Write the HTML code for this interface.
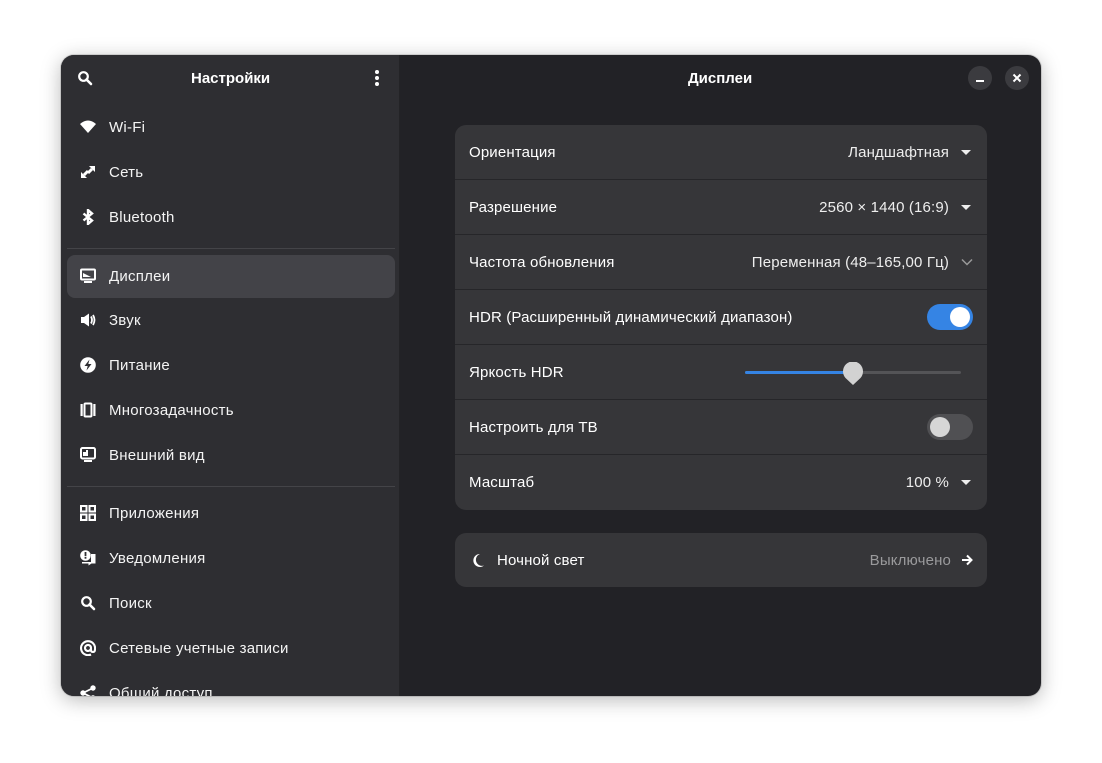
<!DOCTYPE html>
<html><head><meta charset="utf-8"><style>
*{box-sizing:border-box;margin:0;padding:0}
body{width:1102px;height:763px;background:#fff;font-family:"Liberation Sans","DejaVu Sans",sans-serif;font-size:15px;color:#fff;position:relative;overflow:hidden}
.win{position:absolute;left:61px;top:55px;width:980px;height:641px;border-radius:13px;overflow:hidden;background:#222226;box-shadow:0 4px 20px rgba(0,0,0,.28),0 0 0 1px rgba(0,0,0,.12)}
.side{position:absolute;left:0;top:0;width:339px;height:641px;background:#2e2e32;border-right:1px solid #232326}
.title{position:absolute;font-weight:bold;font-size:15px;top:15px}
.item{position:absolute;left:6px;width:328px;height:43px;border-radius:8px;display:flex;align-items:center;padding-left:42px;font-size:15px;color:#f4f4f4;letter-spacing:0.25px}
.item.sel{background:#434348}
.item svg{position:absolute;left:13px;top:13px}
.sep{position:absolute;left:6px;width:328px;height:1px;background:#444448}
.card{position:absolute;left:394px;width:532px;background:#363639;border-radius:11px;letter-spacing:0.15px}
.row{height:55px;border-bottom:1px solid #262629;display:flex;align-items:center;padding:0 14px;position:relative}
.row:last-child{border-bottom:none}
.val{margin-left:auto;color:#eee;display:flex;align-items:center}
.tri{width:0;height:0;border-left:5px solid transparent;border-right:5px solid transparent;border-top:5px solid #eee;margin-left:12px;margin-right:2px}
.btn{position:absolute;top:11px;width:24px;height:24px;border-radius:50%;background:#3b3b3f}
</style></head><body>
<div class="win">
<div class="side">
<svg style="position:absolute;left:16px;top:15px" width="16" height="16" viewBox="0 0 16 16"><circle cx="6.5" cy="6.5" r="4.3" fill="none" stroke="#fff" stroke-width="2.2"/><path d="M9.5 9.5L14 14" stroke="#fff" stroke-width="2.6" stroke-linecap="round"/></svg>
<div class="title" style="left:130px">Настройки</div>
<svg style="position:absolute;left:313px;top:14px" width="6" height="18"><circle cx="3" cy="3" r="2" fill="#fff"/><circle cx="3" cy="9" r="2" fill="#fff"/><circle cx="3" cy="15" r="2" fill="#fff"/></svg>

<div class="item" style="top:51px"><svg width="16" height="16" viewBox="0 0 16 16"><path d="M0 5Q8-2 16 5L8 14Z" fill="#fff"/></svg>Wi-Fi</div>
<div class="item" style="top:96px"><svg width="16" height="16" viewBox="0 0 16 16"><path d="M9 2h6v6zM7 14H1V8z" fill="#fff"/><path d="M12 5L8 9M4 11l4-4" stroke="#fff" stroke-width="3"/></svg>Сеть</div>
<div class="item" style="top:141px"><svg width="16" height="16" viewBox="0 0 16 16"><path d="M3.5 4.5l8.5 7-4 3.5V1l4 3.5-8.5 7" fill="none" stroke="#fff" stroke-width="2.4"/></svg>Bluetooth</div>
<div class="sep" style="top:193px"></div>
<div class="item sel" style="top:200px"><svg width="16" height="16" viewBox="0 0 16 16"><rect x="1" y="1.5" width="14" height="10" rx="1" fill="none" stroke="#fff" stroke-width="2"/><path d="M3 5l8 4H3z" fill="#fff"/><rect x="4" y="13" width="8" height="2" fill="#fff"/></svg>Дисплеи</div>
<div class="item" style="top:244px"><svg width="16" height="16" viewBox="0 0 16 16"><path d="M1 5h3l5-3.5v13L4 11H1z" fill="#fff"/><path d="M11 4.5q2 3.5 0 7M13 3q3 5 0 10" fill="none" stroke="#fff" stroke-width="1.8"/></svg>Звук</div>
<div class="item" style="top:289px"><svg width="16" height="16" viewBox="0 0 16 16"><circle cx="8" cy="8" r="7.8" fill="#fff"/><path d="M9.5 2.5L4.5 9h3.2l-1.2 4.5 5-6.5H8.3z" fill="#2e2e32"/></svg>Питание</div>
<div class="item" style="top:334px"><svg width="16" height="16" viewBox="0 0 16 16"><rect x="0.5" y="2" width="2.2" height="12" fill="#fff"/><rect x="13.3" y="2" width="2.2" height="12" fill="#fff"/><rect x="4.5" y="1.5" width="7" height="13" rx="1" fill="none" stroke="#fff" stroke-width="2"/></svg>Многозадачность</div>
<div class="item" style="top:379px"><svg width="16" height="16" viewBox="0 0 16 16"><rect x="1" y="1" width="14" height="10.5" rx="1.5" fill="none" stroke="#fff" stroke-width="2"/><path d="M3 9V5h3V3h2v6z" fill="#fff"/><rect x="4" y="13" width="8" height="2" fill="#fff"/></svg>Внешний вид</div>
<div class="sep" style="top:431px"></div>
<div class="item" style="top:437px"><svg width="16" height="16" viewBox="0 0 16 16"><g fill="none" stroke="#fff" stroke-width="2"><rect x="1" y="1" width="5.5" height="5.5"/><rect x="9.5" y="1" width="5.5" height="5.5"/><rect x="1" y="9.5" width="5.5" height="5.5"/><rect x="9.5" y="9.5" width="5.5" height="5.5"/></g></svg>Приложения</div>
<div class="item" style="top:482px"><svg width="16" height="16" viewBox="0 0 16 16"><path d="M11 4h4.5v9.5h-4l-3 2v-2H2v-1.5h9z" fill="#fff"/><circle cx="5.5" cy="5.5" r="5.3" fill="#fff"/><rect x="4.6" y="2" width="1.8" height="4.2" fill="#2e2e32"/><rect x="4.6" y="7" width="1.8" height="1.7" fill="#2e2e32"/></svg>Уведомления</div>
<div class="item" style="top:527px"><svg width="16" height="16" viewBox="0 0 16 16"><circle cx="6.5" cy="6.5" r="4.3" fill="none" stroke="#fff" stroke-width="2.2"/><path d="M9.5 9.5L14 14" stroke="#fff" stroke-width="2.6" stroke-linecap="round"/></svg>Поиск</div>
<div class="item" style="top:572px"><svg width="16" height="16" viewBox="0 0 16 16"><path d="M11 8a3 3 0 1 1 0-.1V10q0 2 2 2t2-3A7 7 0 1 0 11 14.5" fill="none" stroke="#fff" stroke-width="2.1"/></svg>Сетевые учетные записи</div>
<div class="item" style="top:617px"><svg width="16" height="16" viewBox="0 0 16 16"><circle cx="13" cy="3" r="2.7" fill="#fff"/><circle cx="3" cy="8" r="2.7" fill="#fff"/><circle cx="13" cy="13" r="2.7" fill="#fff"/><path d="M13 3L3 8l10 5" stroke="#fff" stroke-width="1.8" fill="none"/></svg>Общий доступ</div>
</div>

<div class="title" style="left:627px">Дисплеи</div>
<div class="btn" style="left:907px"><div style="position:absolute;left:8px;top:14px;width:8px;height:2px;background:#fff"></div></div>
<div class="btn" style="left:944px"><svg style="position:absolute;left:7px;top:7px" width="10" height="10"><path d="M1.5 1.5l7 7M8.5 1.5l-7 7" stroke="#fff" stroke-width="2"/></svg></div>

<div class="card" style="top:70px">
<div class="row">Ориентация<div class="val">Ландшафтная<div class="tri"></div></div></div>
<div class="row">Разрешение<div class="val">2560 × 1440 (16:9)<div class="tri"></div></div></div>
<div class="row">Частота обновления<div class="val">Переменная (48–165,00 Гц)<svg style="margin-left:12px" width="12" height="8"><path d="M1 1.5l5 5 5-5" stroke="#999" stroke-width="1.5" fill="none"/></svg></div></div>
<div class="row">HDR (Расширенный динамический диапазон)<div class="val"><div style="width:46px;height:26px;border-radius:13px;background:#3584e4;position:relative"><div style="position:absolute;right:3px;top:3px;width:20px;height:20px;border-radius:50%;background:#fff"></div></div></div></div>
<div class="row">Яркость HDR
<div style="position:absolute;left:290px;top:26px;width:216px;height:3px;border-radius:2px;background:#545457"></div>
<div style="position:absolute;left:290px;top:26px;width:108px;height:3px;border-radius:2px;background:#3584e4"></div>
<svg style="position:absolute;left:387px;top:17px" width="22" height="24" viewBox="0 0 22 24"><path d="M11 23L3.5 16A10 10 0 1 1 18.5 16Z" fill="#d2d2d2"/></svg>
</div>
<div class="row">Настроить для ТВ<div class="val"><div style="width:46px;height:26px;border-radius:13px;background:#505053;position:relative"><div style="position:absolute;left:3px;top:3px;width:20px;height:20px;border-radius:50%;background:#d6d6d6"></div></div></div></div>
<div class="row">Масштаб<div class="val">100 %<div class="tri"></div></div></div>
</div>

<div class="card" style="top:478px;height:54px">
<div class="row" style="height:54px;padding-left:42px">
<svg style="position:absolute;left:16px;top:20px" width="14" height="15" viewBox="0 0 14 15"><path d="M9 1A6.5 6.5 0 1 0 13 12.5 5.5 5.5 0 0 1 9 1z" fill="#fff"/></svg>
Ночной свет<div class="val" style="color:#9a9a9c">Выключено<svg style="margin-left:10px" width="12" height="12"><path d="M1 6h9M6 1.5L10.5 6 6 10.5" stroke="#fff" stroke-width="2" fill="none"/></svg></div></div>
</div>
</div>
</body></html>
